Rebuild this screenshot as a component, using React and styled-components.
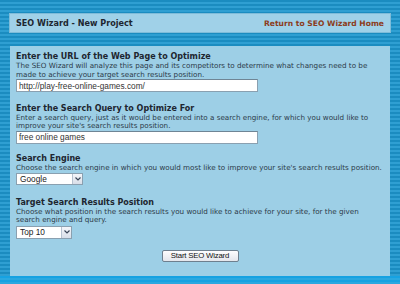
import styled, { createGlobalStyle } from "styled-components";

const GlobalStyle = createGlobalStyle`
  html, body {
    margin: 0;
    padding: 0;
  }
  body {
    width: 400px;
    height: 284px;
    overflow: hidden;
    font-family: "DejaVu Sans", Verdana, sans-serif;
  }
`;

const Page = styled.div`
  width: 400px;
  height: 284px;
  box-sizing: border-box;
  padding: 13px 9px 0 9px;
  background: repeating-linear-gradient(
    to bottom,
    #1b8cc0 0px,
    #1b8cc0 2px,
    #2f9fd2 2px,
    #2f9fd2 4px
  );
  display: flex;
  flex-direction: column;
  gap: 13px;
  position: relative;
`;

const Header = styled.div`
  height: 20px;
  box-sizing: border-box;
  background: #a0d1e8;
  border: 1px solid #7fbcd9;
  display: flex;
  align-items: center;
  justify-content: space-between;
  padding: 0 6px 0 6px;
`;

const HeaderTitle = styled.span`
  font-size: 8.1px;
  font-weight: bold;
  color: #1d2630;
`;

const HomeLink = styled.a`
  font-size: 7.6px;
  font-weight: bold;
  color: #8c3c1c;
  text-decoration: none;
`;

const Panel = styled.form`
  margin: 0 1px;
  height: 230px;
  box-sizing: border-box;
  background: #9dcfe6;
  padding: 5px 6px 0 6px;
  display: flex;
  flex-direction: column;
`;

const Section = styled.div`
  display: flex;
  flex-direction: column;
  margin-bottom: ${(p) => p.$gap || 10}px;
`;

const Title = styled.div`
  font-size: 8px;
  font-weight: bold;
  color: #1d2630;
  line-height: 11px;
  white-space: nowrap;
`;

const Desc = styled.div`
  font-size: 7.2px;
  color: #2c3a48;
  line-height: 8.5px;
  white-space: nowrap;
`;

const TextBox = styled.input`
  width: 242px;
  height: 13px;
  box-sizing: border-box;
  margin: 0;
  border: 1px solid #8aa0b0;
  border-top-color: #6f8595;
  background: #fff;
  padding: 0 2px;
  font-family: "Liberation Sans", Arial, sans-serif;
  font-size: 8.3px;
  color: #333;
  outline: none;
`;

const SelectBox = styled.div`
  width: ${(p) => p.$w}px;
  height: ${(p) => p.$h}px;
  box-sizing: border-box;
  margin-top: 1px;
  border: 1px solid #8aa0b0;
  background: #fff;
  display: flex;
  align-items: center;
  font-family: "Liberation Sans", Arial, sans-serif;
  font-size: 8.3px;
  color: #222;
`;

const SelectText = styled.span`
  flex: 1;
  padding-left: 3px;
`;

const Arrow = styled.span`
  width: 10px;
  height: 100%;
  box-sizing: border-box;
  background: linear-gradient(#f4f6fa, #d8dee8);
  border-left: 1px solid #b6c2d0;
  display: flex;
  align-items: center;
  justify-content: center;
`;

const ButtonRow = styled.div`
  display: flex;
  justify-content: center;
`;

const Button = styled.button`
  width: 77px;
  height: 12px;
  box-sizing: border-box;
  padding: 0;
  border: 1px solid #6e7f8e;
  border-radius: 2px;
  background: linear-gradient(#fdfdfe, #e4e6ec);
  font-family: "Liberation Sans", Arial, sans-serif;
  font-size: 7.8px;
  line-height: 10px;
  color: #111;
  letter-spacing: -0.2px;
`;

const BottomBand = styled.div`
  position: absolute;
  left: 0;
  right: 0;
  bottom: 0;
  height: 8px;
  background: repeating-linear-gradient(
    to bottom,
    #16a2e2 0px,
    #16a2e2 2px,
    #2aa8e0 2px,
    #2aa8e0 4px
  );
`;

const Chevron = () => (
  <svg width="6" height="4" viewBox="0 0 6 4">
    <path d="M0.5 0.5 L3 3 L5.5 0.5" fill="none" stroke="#3a4658" strokeWidth="1.2" />
  </svg>
);

const Select = ({ value, width, height }) => (
  <SelectBox $w={width} $h={height}>
    <SelectText>{value}</SelectText>
    <Arrow>
      <Chevron />
    </Arrow>
  </SelectBox>
);

export default function App() {
  return (
    <>
      <GlobalStyle />
      <Page>
        <Header>
          <HeaderTitle>SEO Wizard - New Project</HeaderTitle>
          <HomeLink href="#">Return to SEO Wizard Home</HomeLink>
        </Header>
        <Panel onSubmit={(e) => e.preventDefault()}>
          <Section $gap={10.5}>
            <Title>Enter the URL of the Web Page to Optimize</Title>
            <Desc>
              The SEO Wizard will analyze this page and its competitors to determine what changes need to be
              <br />
              made to achieve your target search results position.
            </Desc>
            <TextBox defaultValue="http://play-free-online-games.com/" readOnly />
          </Section>
          <Section $gap={9}>
            <Title>Enter the Search Query to Optimize For</Title>
            <Desc>
              Enter a search query, just as it would be entered into a search engine, for which you would like to
              <br />
              improve your site's search results position.
            </Desc>
            <TextBox defaultValue="free online games" readOnly />
          </Section>
          <Section $gap={11.5}>
            <Title>Search Engine</Title>
            <Desc>Choose the search engine in which you would most like to improve your site's search results position.</Desc>
            <Select value="Google" width={67} height={12} />
          </Section>
          <Section $gap={11.5}>
            <Title>Target Search Results Position</Title>
            <Desc>
              Choose what position in the search results you would like to achieve for your site, for the given
              <br />
              search engine and query.
            </Desc>
            <Select value="Top 10" width={56} height={13} />
          </Section>
          <ButtonRow>
            <Button type="submit">Start SEO Wizard</Button>
          </ButtonRow>
        </Panel>
        <BottomBand />
      </Page>
    </>
  );
}
